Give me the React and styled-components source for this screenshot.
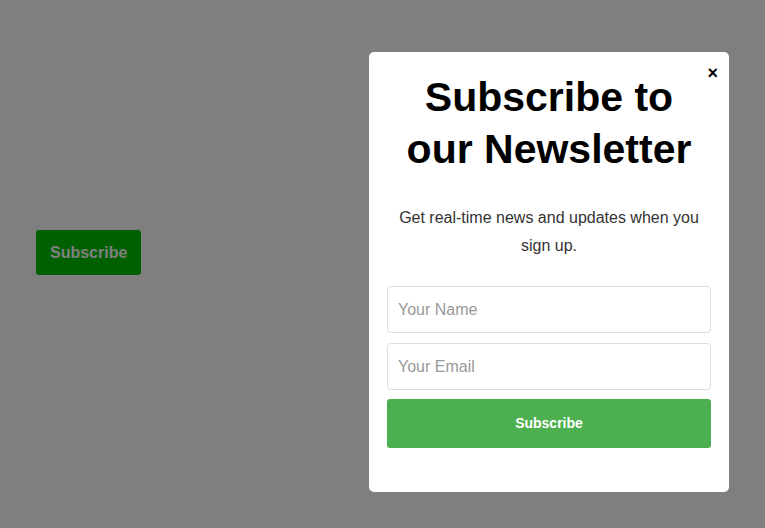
import React, { useState } from 'react';
import styled, { createGlobalStyle } from 'styled-components';

const GlobalStyle = createGlobalStyle`
  * { box-sizing: border-box; }
  body {
    margin: 0;
    font-family: "Liberation Sans", Arial, sans-serif;
    background: #ffffff;
  }
`;

const Page = styled.div`
  min-height: 100vh;
  padding: 230px 36px;
`;

const OpenButton = styled.button`
  display: inline-block;
  padding: 13px 14px;
  border: none;
  border-radius: 3px;
  background: #00c000;
  color: #ffffff;
  font-family: "Liberation Sans", Arial, sans-serif;
  font-weight: 700;
  font-size: 16px;
  line-height: 19px;
  cursor: pointer;
`;

const Overlay = styled.div`
  position: fixed;
  inset: 0;
  background: rgba(0, 0, 0, 0.5);
  display: flex;
  align-items: flex-start;
  padding: 52px 0 0 369px;
`;

const Modal = styled.div`
  position: relative;
  width: 360px;
  padding: 19px 18px 44px;
  background: #ffffff;
  border-radius: 5px;
  text-align: center;
`;

const Close = styled.span`
  position: absolute;
  top: 11px;
  right: 11px;
  font-size: 18px;
  line-height: 20px;
  font-weight: 700;
  color: #000;
  cursor: pointer;
`;

const Title = styled.h2`
  margin: 0;
  padding: 0 4px;
  font-size: 41px;
  line-height: 52px;
  font-weight: 700;
  color: #000;
`;

const Text = styled.p`
  margin: 29px 0 26px;
  font-size: 16px;
  line-height: 28px;
  color: #333;
`;

const Form = styled.form`
  display: flex;
  flex-direction: column;
`;

const Field = styled.input`
  display: block;
  width: 100%;
  height: 47px;
  margin-bottom: ${p => (p.$last ? '9px' : '10px')};
  padding: 0 10px;
  border: 1px solid #ddd;
  border-radius: 4px;
  font-family: "Liberation Sans", Arial, sans-serif;
  font-size: 16px;
  color: #333;
  outline: none;

  &::placeholder {
    color: #999;
  }
`;

const Submit = styled.button`
  height: 49px;
  padding: 0 0 2px;
  border: none;
  border-radius: 3px;
  background: #4caf50;
  color: #ffffff;
  font-family: "Liberation Sans", Arial, sans-serif;
  font-weight: 700;
  font-size: 14px;
  cursor: pointer;
`;

export default function App() {
  const [open, setOpen] = useState(true);

  return (
    <>
      <GlobalStyle />
      <Page>
        <OpenButton onClick={() => setOpen(true)}>Subscribe</OpenButton>
      </Page>
      {open && (
        <Overlay>
          <Modal>
            <Close onClick={() => setOpen(false)}>×</Close>
            <Title>Subscribe to our Newsletter</Title>
            <Text>Get real-time news and updates when you sign up.</Text>
            <Form onSubmit={e => e.preventDefault()}>
              <Field type="text" placeholder="Your Name" />
              <Field type="email" placeholder="Your Email" $last />
              <Submit type="submit">Subscribe</Submit>
            </Form>
          </Modal>
        </Overlay>
      )}
    </>
  );
}
